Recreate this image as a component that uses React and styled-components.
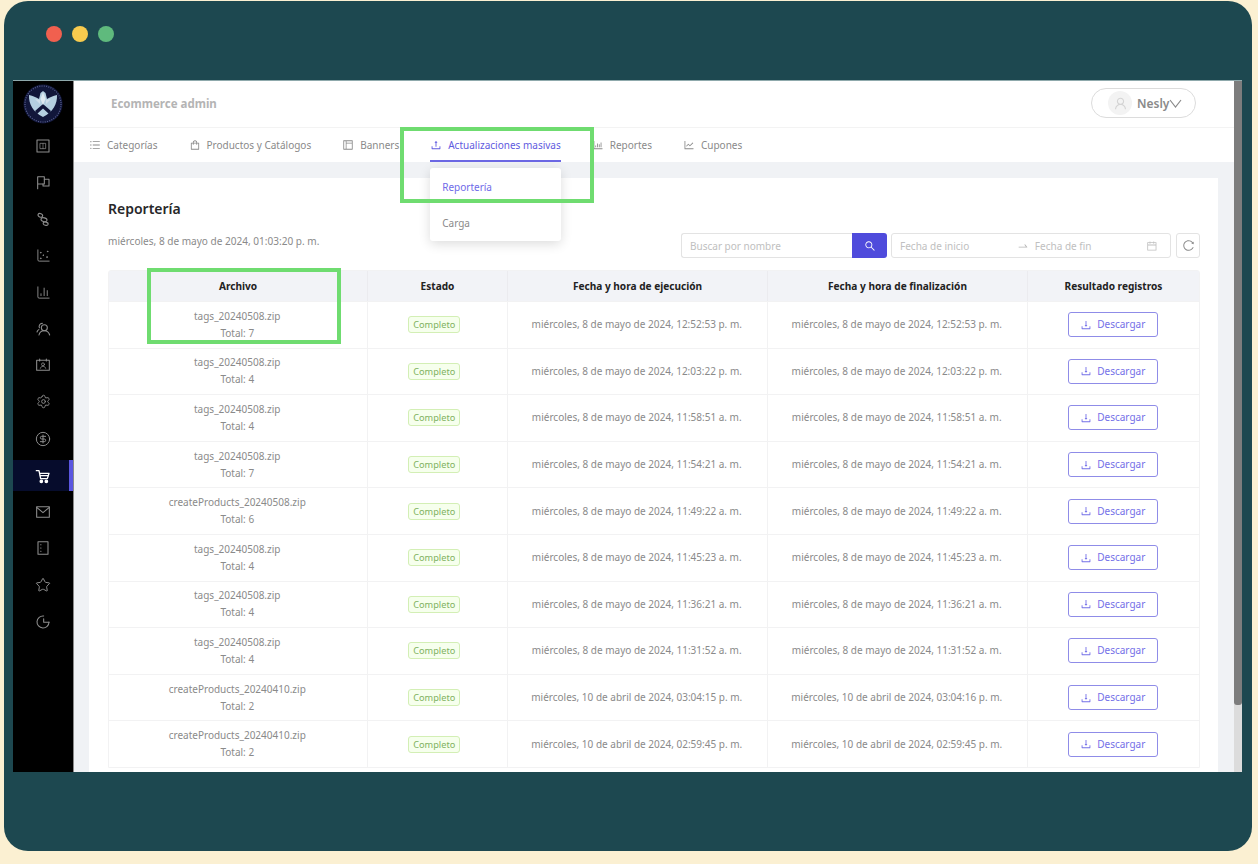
import React from 'react';
import styled, { createGlobalStyle } from 'styled-components';
import {
  AiOutlineUnorderedList, AiOutlineShopping, AiOutlineLayout, AiOutlineUpload, AiOutlineBarChart,
  AiOutlineLineChart, AiOutlineDownload, AiOutlineSearch, AiOutlineCalendar, AiOutlineReload,
  AiOutlineSwapRight, AiOutlineUser,
} from 'react-icons/ai';
import {
  ChartScatter, ChartColumn, Settings, CircleDollarSign, Star,
} from 'lucide-react';

const Global = createGlobalStyle`
  html, body { margin: 0; padding: 0; height: 864px; overflow: hidden; background: #fbf0d2; }
  body { font-family: "Noto Sans", "Open Sans", sans-serif; }
  * { box-sizing: border-box; }
`;

const Stage = styled.div`
  padding: 1px 6px 0 4px;
  height: 864px;
`;
const Frame = styled.div`
  width: 1248px;
  height: 850px;
  background: #1d4850;
  border-radius: 24px;
  padding: 0 10px 0 9px;
`;
const TitleBar = styled.div`
  height: 79px;
  display: flex;
  align-items: center;
  gap: 10px;
  padding: 0 0 13px 33px;
`;
const Dot = styled.span`
  width: 16px;
  height: 16px;
  border-radius: 50%;
  background: ${p => p.$c};
`;
const AppWindow = styled.div`
  height: 692px;
  display: flex;
  overflow: hidden;
  border-top: 1px solid #8fa9ac;
`;
const Sidebar = styled.nav`
  width: 60px;
  flex: none;
  background: #000;
  display: flex;
  flex-direction: column;
`;
const LogoWrap = styled.div`
  height: 46.5px;
  display: flex;
  align-items: center;
  justify-content: center;
`;
const SideList = styled.div`
  display: flex;
  flex-direction: column;
`;
const SideItem = styled.div`
  height: 36.6px;
  display: flex;
  align-items: center;
  justify-content: center;
  position: relative;
  color: ${p => (p.$active ? '#fff' : '#8d8d8d')};
  background: ${p => (p.$active ? '#060c2c' : 'transparent')};
  ${p => p.$active && 'border-right: 4px solid #5a56e0; padding-left: 3px; height: 31px; margin: 3.6px 0 2px;'}
`;
const Main = styled.div`
  flex: 1;
  min-width: 0;
  display: flex;
  flex-direction: column;
  background: #f0f2f5;
  border-left: 1px solid #8a8a8a;
`;
const Header = styled.header`
  height: 47px;
  flex: none;
  background: #fff;
  border-bottom: 1px solid #f3f3f3;
  display: flex;
  align-items: center;
  justify-content: space-between;
  padding: 0 46px 2px 37px;
`;
const Brand = styled.div`
  font-size: 11.5px;
  font-weight: 700;
  color: #b4b4b4;
`;
const UserPill = styled.div`
  width: 105px;
  height: 30px;
  border: 1px solid #dcdcdc;
  border-radius: 15px;
  display: flex;
  align-items: center;
  padding-left: 16px;
  gap: 5px;
  font-size: 12px;
  font-weight: 600;
  color: #8a8a8a;
`;
const Avatar = styled.span`
  width: 24px;
  height: 24px;
  border-radius: 50%;
  background: #f3f3f3;
  color: #d4d4d4;
  display: flex;
  align-items: center;
  justify-content: center;
`;
const NameBox = styled.span`
  display: inline-flex;
  align-items: center;
`;
const Tabs = styled.div`
  height: 34px;
  flex: none;
  background: #fff;
  display: flex;
  align-items: stretch;
  gap: 31px;
  padding-left: 15px;
`;
const Tab = styled.div`
  position: relative;
  display: flex;
  align-items: center;
  gap: 6px;
  font-size: 10px;
  color: ${p => (p.$active ? '#5f5be0' : '#8a8a8a')};
  white-space: nowrap;
  ${p => p.$active && 'box-shadow: inset 0 -2px 0 #6c68e4;'}
`;
const Dropdown = styled.div`
  position: absolute;
  left: 0;
  right: 0;
  top: 40px;
  height: 73px;
  background: #fff;
  border-radius: 3px;
  box-shadow: 0 3px 12px rgba(0, 0, 0, 0.14);
  display: flex;
  flex-direction: column;
  padding: 1px 12px 0;
  z-index: 5;
`;
const DropItem = styled.div`
  height: 37px;
  display: flex;
  align-items: center;
  font-size: 10px;
  color: ${p => (p.$active ? '#6f6be8' : '#8a8a8a')};
`;
const ContentRow = styled.div`
  flex: 1;
  min-height: 0;
  display: flex;
`;
const Scroll = styled.div`
  flex: 1;
  min-width: 0;
  padding: 16px 16px 0 15px;
  overflow: hidden;
`;
const Card = styled.section`
  background: #fff;
  padding: 21px 18px 0 19px;
  height: 600px;
`;
const Title = styled.h1`
  margin: 0;
  font-size: 14px;
  line-height: 20px;
  font-weight: 600;
  color: #27272a;
`;
const ToolRow = styled.div`
  display: flex;
  justify-content: space-between;
  align-items: flex-start;
  height: 37px;
  margin-top: 14px;
`;
const DateText = styled.div`
  font-size: 10.05px;
  line-height: 16px;
  color: #8a8a8a;
`;
const Tools = styled.div`
  display: flex;
  gap: 4px;
`;
const SearchGroup = styled.div`
  display: flex;
  width: 206px;
  height: 25px;
`;
const SearchInput = styled.div`
  flex: 1;
  border: 1px solid #e3e3e3;
  border-right: 0;
  border-radius: 3px 0 0 3px;
  font-size: 10px;
  color: #c0c0c0;
  display: flex;
  align-items: center;
  padding-left: 8px;
`;
const SearchBtn = styled.div`
  width: 35px;
  background: #4f4bdc;
  border-radius: 0 3px 3px 0;
  color: #fff;
  display: flex;
  align-items: center;
  justify-content: center;
`;
const RangeBox = styled.div`
  width: 280px;
  height: 25px;
  border: 1px solid #e3e3e3;
  border-radius: 3px;
  display: flex;
  align-items: center;
  padding: 0 12px 0 8px;
  font-size: 10px;
  color: #c0c0c0;
`;
const RangeField = styled.span`
  width: ${p => p.$w}px;
`;
const RangeArrow = styled.span`
  width: 18px;
  display: flex;
  color: #b5b5b5;
`;
const RefreshBtn = styled.div`
  width: 24px;
  height: 25px;
  margin-left: 1px;
  border: 1px solid #e3e3e3;
  border-radius: 3px;
  color: #8a8a8a;
  display: flex;
  align-items: center;
  justify-content: center;
`;
const Table = styled.div`
  width: 1092px;
  border: 1px solid #f2f2f3;
  border-radius: 3px 3px 0 0;
`;
const HeadRow = styled.div`
  display: grid;
  grid-template-columns: 259px 140px 260px 260px 1fr;
  height: 30px;
  background: #f2f3f7;
`;
const HeadCell = styled.div`
  display: flex;
  align-items: center;
  justify-content: center;
  font-size: 10.1px;
  font-weight: 700;
  color: #222;
  border-right: 1px solid #ebebef;
  &:last-child { border-right: 0; }
`;
const Row = styled.div`
  display: grid;
  grid-template-columns: 259px 140px 260px 260px 1fr;
  height: 46.6px;
  border-top: 1px solid #f2f2f3;
`;
const Cell = styled.div`
  display: flex;
  flex-direction: column;
  align-items: center;
  justify-content: center;
  font-size: 10px;
  line-height: 17px;
  color: #8a8a8a;
  padding-right: 1.5px;
  border-right: 1px solid #f2f2f3;
  &:last-child { border-right: 0; }
`;
const StatusTag = styled.span`
  height: 17px;
  padding: 0 4px;
  margin-right: 5px;
  display: inline-flex;
  align-items: center;
  border: 1px solid #d3efb5;
  background: #f6ffed;
  border-radius: 3px;
  color: #7fb25f;
  font-size: 9.2px;
`;
const DownloadBtn = styled.div`
  width: 90px;
  height: 25px;
  border: 1px solid #8f8ce8;
  border-radius: 3px;
  display: flex;
  align-items: center;
  justify-content: center;
  gap: 5px;
  font-size: 10px;
  color: #7470e8;
`;
const ScrollBar = styled.div`
  width: 8px;
  flex: none;
  background: #dcdcdc;
  margin-top: -81px;
  z-index: 2;
`;
const ScrollThumb = styled.div`
  height: 624px;
  background: #7d7d7d;
  border-radius: 0 0 3px 3px;
`;
const Highlight = styled.div`
  position: absolute;
  left: ${p => p.$x}px;
  top: ${p => p.$y}px;
  width: 194px;
  height: ${p => p.$h}px;
  border: 4px solid #6fdc70;
  z-index: 10;
  pointer-events: none;
`;

const Logo = () => (
  <svg width="40" height="40" viewBox="0 0 40 40">
    <circle cx="20" cy="20" r="19.5" fill="#11163a" />
    <circle cx="20" cy="20" r="18" fill="none" stroke="#5a618f" strokeWidth="1.2" strokeDasharray="1 1.3" />
    <path d="M6 11 C10 12 13 13 16 15 L17.5 9 L20 7 L22.5 9 L24 15 C27 13 30 12 34 11 C34.5 20 30 28 20 33 C10 28 5.500 20 6 11 Z" fill="#b4cfe0" />
    <path d="M12 27 L20 20 L28 27 L26 30 L20 24.500 L14 30 Z" fill="#11163a" />
    <path d="M20 8.500 L17.500 15 L20 21 L22.500 15 Z" fill="#dfeaf1" />
    <path d="M17 16 L12 15 L17 20 Z M23 16 L28 15 L23 20 Z" fill="#cfdfea" />
  </svg>
);

const sw = { width: 16, height: 16, viewBox: '0 0 24 24', fill: 'none', stroke: 'currentColor', strokeWidth: 1.6, strokeLinecap: 'round', strokeLinejoin: 'round' };

const BoardIcon = () => (
  <svg {...sw}><rect x="3" y="3" width="18" height="18" /><rect x="8" y="8" width="8" height="8" strokeWidth="1.1" /><path d="M12 8v8" strokeWidth="1" /></svg>
);
const FlagsIcon = () => (
  <svg {...sw}><path d="M4 22V4h10v11H4" /><path d="M14 8h7v10h-9v-3" /></svg>
);
const ChainIcon = () => (
  <svg {...sw}><ellipse cx="8" cy="6.500" rx="3.600" ry="2.600" transform="rotate(25 8 6.500)" /><ellipse cx="13.500" cy="13" rx="4.600" ry="2.800" transform="rotate(15 13.500 13)" /><ellipse cx="16" cy="19" rx="3.800" ry="2.400" transform="rotate(15 16 19)" /></svg>
);
const PeopleIcon = () => (
  <svg {...sw}><circle cx="14" cy="10" r="4.500" /><path d="M6 21c.6-4 3.600-6.500 8-6.500s7 2.500 8 6.500" /><path d="M11 3.600A4.500 4.500 0 0 0 6.600 10M3 16.500c.5-1.600 1.400-2.800 2.800-3.600" /></svg>
);
const CardIcon = () => (
  <svg {...sw}><rect x="2.500" y="5" width="19" height="15" /><path d="M7 3v3M17 3v3" /><circle cx="12" cy="11" r="2.200" strokeWidth="1.2" /><path d="M8 17c.5-2 2-3 4-3s3.500 1 4 3" strokeWidth="1.2" /></svg>
);
const CartIcon = () => (
  <svg {...sw} strokeWidth="2"><path d="M2 4h4l2.500 12h10L21 8H7" /><path d="M8 11.500h12" /><circle cx="9.500" cy="20" r="1.800" fill="currentColor" /><circle cx="17" cy="20" r="1.800" fill="currentColor" /></svg>
);
const EnvelopeIcon = () => (
  <svg {...sw}><rect x="2.500" y="4" width="19" height="16" /><path d="M2.500 5l9.500 8 9.500-8" /></svg>
);
const BookIcon = () => (
  <svg {...sw}><rect x="4.500" y="2.500" width="15" height="19" /><path d="M8.500 7h.5M8.500 12h.5M8.500 17h.5" /></svg>
);
const ClockIcon = () => (
  <svg {...sw}><path d="M21 12a9 9 0 1 1-8-9" /><path d="M13 7v5.500h8" /></svg>
);

const sideIcons = [
  <BoardIcon />, <FlagsIcon />, <ChainIcon />, <ChartScatter size={15} strokeWidth={1.5} />,
  <ChartColumn size={15} strokeWidth={1.5} />, <PeopleIcon />, <CardIcon />,
  <Settings size={15} strokeWidth={1.5} />, <CircleDollarSign size={16} strokeWidth={1.5} />,
  <CartIcon />, <EnvelopeIcon />, <BookIcon />, <Star size={16} strokeWidth={1.5} />, <ClockIcon />,
];

const Chevron = () => (
  <svg width="13" height="13" viewBox="0 0 13 13" fill="none" stroke="currentColor" strokeWidth="1.2">
    <path d="M1 3l5.500 7L12 3" />
  </svg>
);

const rows = [
  ['tags_20240508.zip', 7, 'miércoles, 8 de mayo de 2024, 12:52:53 p. m.'],
  ['tags_20240508.zip', 4, 'miércoles, 8 de mayo de 2024, 12:03:22 p. m.'],
  ['tags_20240508.zip', 4, 'miércoles, 8 de mayo de 2024, 11:58:51 a. m.'],
  ['tags_20240508.zip', 7, 'miércoles, 8 de mayo de 2024, 11:54:21 a. m.'],
  ['createProducts_20240508.zip', 6, 'miércoles, 8 de mayo de 2024, 11:49:22 a. m.'],
  ['tags_20240508.zip', 4, 'miércoles, 8 de mayo de 2024, 11:45:23 a. m.'],
  ['tags_20240508.zip', 4, 'miércoles, 8 de mayo de 2024, 11:36:21 a. m.'],
  ['tags_20240508.zip', 4, 'miércoles, 8 de mayo de 2024, 11:31:52 a. m.'],
  ['createProducts_20240410.zip', 2, 'miércoles, 10 de abril de 2024, 03:04:15 p. m.', 'miércoles, 10 de abril de 2024, 03:04:16 p. m.'],
  ['createProducts_20240410.zip', 2, 'miércoles, 10 de abril de 2024, 02:59:45 p. m.'],
];

const tabs = [
  ['Categorías', <AiOutlineUnorderedList size={12} />],
  ['Productos y Catálogos', <AiOutlineShopping size={12} />],
  ['Banners', <AiOutlineLayout size={12} />],
  ['Actualizaciones masivas', <AiOutlineUpload size={12} />, true],
  ['Reportes', <AiOutlineBarChart size={12} />],
  ['Cupones', <AiOutlineLineChart size={12} />],
];

export default function App() {
  return (
    <Stage>
      <Global />
      <Frame>
        <TitleBar>
          <Dot $c="#f1604f" />
          <Dot $c="#f8cb4e" />
          <Dot $c="#5fba7d" />
        </TitleBar>
        <AppWindow>
          <Sidebar>
            <LogoWrap><Logo /></LogoWrap>
            <SideList>
              {sideIcons.map((icon, i) => (
                <SideItem key={i} $active={i === 9}>{icon}</SideItem>
              ))}
            </SideList>
          </Sidebar>
          <Main>
            <Header>
              <Brand>Ecommerce admin</Brand>
              <UserPill>
                <Avatar><AiOutlineUser size={15} /></Avatar>
                <NameBox>Nesly<Chevron /></NameBox>
              </UserPill>
            </Header>
            <Tabs>
              {tabs.map(([label, icon, active]) => (
                <Tab key={label} $active={active}>
                  {icon}{label}
                  {active && (
                    <Dropdown>
                      <DropItem $active>Reportería</DropItem>
                      <DropItem>Carga</DropItem>
                    </Dropdown>
                  )}
                </Tab>
              ))}
            </Tabs>
            <ContentRow>
              <Scroll>
                <Card>
                  <Title>Reportería</Title>
                  <ToolRow>
                    <DateText>miércoles, 8 de mayo de 2024, 01:03:20 p. m.</DateText>
                    <Tools>
                      <SearchGroup>
                        <SearchInput>Buscar por nombre</SearchInput>
                        <SearchBtn><AiOutlineSearch size={12} /></SearchBtn>
                      </SearchGroup>
                      <RangeBox>
                        <RangeField $w={120}>Fecha de inicio</RangeField>
                        <RangeArrow><AiOutlineSwapRight size={12} /></RangeArrow>
                        <RangeField $w={114}>Fecha de fin</RangeField>
                        <AiOutlineCalendar size={12} />
                      </RangeBox>
                      <RefreshBtn><AiOutlineReload size={13} /></RefreshBtn>
                    </Tools>
                  </ToolRow>
                  <Table>
                    <HeadRow>
                      <HeadCell>Archivo</HeadCell>
                      <HeadCell>Estado</HeadCell>
                      <HeadCell>Fecha y hora de ejecución</HeadCell>
                      <HeadCell>Fecha y hora de finalización</HeadCell>
                      <HeadCell>Resultado registros</HeadCell>
                    </HeadRow>
                    {rows.map(([file, total, date, end], i) => (
                      <Row key={i}>
                        <Cell><span>{file}</span><span>Total: {total}</span></Cell>
                        <Cell><StatusTag>Completo</StatusTag></Cell>
                        <Cell>{date}</Cell>
                        <Cell>{end || date}</Cell>
                        <Cell><DownloadBtn><AiOutlineDownload size={12} />Descargar</DownloadBtn></Cell>
                      </Row>
                    ))}
                  </Table>
                </Card>
              </Scroll>
              <ScrollBar><ScrollThumb /></ScrollBar>
            </ContentRow>
          </Main>
        </AppWindow>
      </Frame>
      <Highlight $x={400} $y={127} $h={76} />
      <Highlight $x={147} $y={268} $h={76} />
    </Stage>
  );
}
